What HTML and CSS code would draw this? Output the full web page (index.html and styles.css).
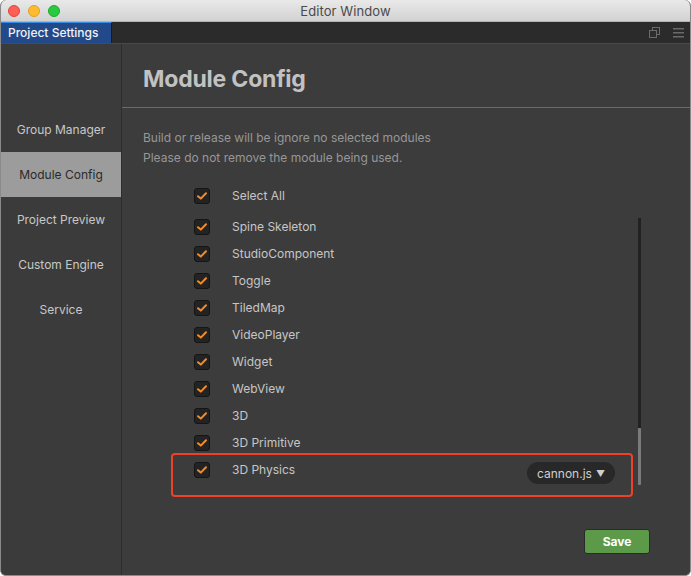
FILE: index.html
```html
<!DOCTYPE html>
<html>
<head>
<meta charset="utf-8">
<link rel="stylesheet" href="styles.css">
</head>
<body>
<div class="window">
  <div class="titlebar">
    <div class="lights">
      <span class="light red"></span>
      <span class="light yellow"></span>
      <span class="light green"></span>
    </div>
    <div class="title">Editor Window</div>
  </div>
  <div class="tabbar">
    <div class="tab">Project Settings</div>
    <div class="tab-tools">
      <svg width="11" height="11" viewBox="0 0 11 11"><rect x="3.5" y="0.5" width="7" height="7" fill="none" stroke="#6a6a6a"/><rect x="0.5" y="3.5" width="7" height="7" fill="#2d2d2d" stroke="#6a6a6a"/></svg>
      <svg width="11" height="10" viewBox="0 0 11 10"><rect x="0" y="0" width="11" height="1.5" fill="#6a6a6a"/><rect x="0" y="4" width="11" height="1.5" fill="#6a6a6a"/><rect x="0" y="8" width="11" height="1.5" fill="#6a6a6a"/></svg>
    </div>
  </div>
  <div class="body">
    <div class="sidebar">
      <div class="nav-item">Group Manager</div>
      <div class="nav-item active">Module Config</div>
      <div class="nav-item">Project Preview</div>
      <div class="nav-item">Custom Engine</div>
      <div class="nav-item">Service</div>
    </div>
    <div class="main">
      <h1 class="heading">Module Config</h1>
      <div class="desc">
        <div>Build or release will be ignore no selected modules</div>
        <div>Please do not remove the module being used.</div>
      </div>
      <div class="select-all row">
        <span class="check"><svg width="10" height="8" viewBox="0 0 10 8"><path d="M1 4.2 L3.8 6.6 L9 1.2" fill="none" stroke="#f28c28" stroke-width="2" stroke-linecap="round" stroke-linejoin="round"/></svg></span>
        <span class="label">Select All</span>
      </div>
      <div class="list-wrap">
        <div class="list">
          <div class="row"><span class="check"><svg width="10" height="8" viewBox="0 0 10 8"><path d="M1 4.2 L3.8 6.6 L9 1.2" fill="none" stroke="#f28c28" stroke-width="2" stroke-linecap="round" stroke-linejoin="round"/></svg></span><span class="label">Spine Skeleton</span></div>
          <div class="row"><span class="check"><svg width="10" height="8" viewBox="0 0 10 8"><path d="M1 4.2 L3.8 6.6 L9 1.2" fill="none" stroke="#f28c28" stroke-width="2" stroke-linecap="round" stroke-linejoin="round"/></svg></span><span class="label">StudioComponent</span></div>
          <div class="row"><span class="check"><svg width="10" height="8" viewBox="0 0 10 8"><path d="M1 4.2 L3.8 6.6 L9 1.2" fill="none" stroke="#f28c28" stroke-width="2" stroke-linecap="round" stroke-linejoin="round"/></svg></span><span class="label">Toggle</span></div>
          <div class="row"><span class="check"><svg width="10" height="8" viewBox="0 0 10 8"><path d="M1 4.2 L3.8 6.6 L9 1.2" fill="none" stroke="#f28c28" stroke-width="2" stroke-linecap="round" stroke-linejoin="round"/></svg></span><span class="label">TiledMap</span></div>
          <div class="row"><span class="check"><svg width="10" height="8" viewBox="0 0 10 8"><path d="M1 4.2 L3.8 6.6 L9 1.2" fill="none" stroke="#f28c28" stroke-width="2" stroke-linecap="round" stroke-linejoin="round"/></svg></span><span class="label">VideoPlayer</span></div>
          <div class="row"><span class="check"><svg width="10" height="8" viewBox="0 0 10 8"><path d="M1 4.2 L3.8 6.6 L9 1.2" fill="none" stroke="#f28c28" stroke-width="2" stroke-linecap="round" stroke-linejoin="round"/></svg></span><span class="label">Widget</span></div>
          <div class="row"><span class="check"><svg width="10" height="8" viewBox="0 0 10 8"><path d="M1 4.2 L3.8 6.6 L9 1.2" fill="none" stroke="#f28c28" stroke-width="2" stroke-linecap="round" stroke-linejoin="round"/></svg></span><span class="label">WebView</span></div>
          <div class="row"><span class="check"><svg width="10" height="8" viewBox="0 0 10 8"><path d="M1 4.2 L3.8 6.6 L9 1.2" fill="none" stroke="#f28c28" stroke-width="2" stroke-linecap="round" stroke-linejoin="round"/></svg></span><span class="label">3D</span></div>
          <div class="row"><span class="check"><svg width="10" height="8" viewBox="0 0 10 8"><path d="M1 4.2 L3.8 6.6 L9 1.2" fill="none" stroke="#f28c28" stroke-width="2" stroke-linecap="round" stroke-linejoin="round"/></svg></span><span class="label">3D Primitive</span></div>
          <div class="row physics"><span class="check"><svg width="10" height="8" viewBox="0 0 10 8"><path d="M1 4.2 L3.8 6.6 L9 1.2" fill="none" stroke="#f28c28" stroke-width="2" stroke-linecap="round" stroke-linejoin="round"/></svg></span><span class="label">3D Physics</span>
            <span class="dropdown">cannon.js <span class="caret">▼</span></span>
          </div>
          <div class="highlight"></div>
        </div>
        <div class="scrollbar"><div class="thumb"></div></div>
      </div>
      <div class="footer">
        <button class="save">Save</button>
      </div>
    </div>
  </div>
</div>
</body>
</html>
```
FILE: styles.css
```css
html, body {
  margin: 0;
  padding: 0;
  background: #ffffff;
}
body {
  width: 691px;
  height: 576px;
  overflow: hidden;
  font-family: Inter, "Noto Sans", "Liberation Sans", sans-serif;
}
.window {
  width: 691px;
  height: 576px;
  box-sizing: border-box;
  border-radius: 6px;
  overflow: hidden;
  display: flex;
  flex-direction: column;
  background: #3c3c3c;
  border: 1px solid #8a8a8a;
  border-top: none;
}
.titlebar {
  height: 22px;
  flex: 0 0 22px;
  background: linear-gradient(#e9e9e9, #d2d2d2);
  border-bottom: 1px solid #b3b3b3;
  box-sizing: border-box;
  display: flex;
  align-items: center;
  justify-content: center;
  position: relative;
}
.lights {
  position: absolute;
  left: 7px;
  top: 5px;
  display: flex;
  gap: 8px;
}
.light {
  width: 12px;
  height: 12px;
  border-radius: 50%;
  box-sizing: border-box;
}
.red { background: #fd5f57; border: 0.5px solid #e0443e; }
.yellow { background: #febb2e; border: 0.5px solid #dea123; }
.green { background: #29c940; border: 0.5px solid #1aab29; }
.title {
  font-size: 13px;
  color: #4a4a4a;
  letter-spacing: 0.1px;
}
.tabbar {
  height: 21px;
  flex: 0 0 21px;
  background: #2b2b2b;
  display: flex;
  justify-content: space-between;
  border-bottom: 1px solid #4a4a4a;
}
.tab {
  width: 111px;
  box-sizing: border-box;
  background: #22498a;
  border-top: 1px solid #3a8de2;
  border-right: 1px solid #1b1b1b;
  color: #f2f2f2;
  font-size: 12px;
  font-weight: 500;
  padding-left: 7px;
  line-height: 19px;
  white-space: nowrap;
}
.tab-tools {
  display: flex;
  align-items: center;
  gap: 13px;
  padding-right: 6px;
}
.body {
  flex: 1;
  display: flex;
  min-height: 0;
}
.sidebar {
  width: 120px;
  flex: 0 0 120px;
  background: #3b3b3b;
  border-right: 1px solid #2e2e2e;
  padding-top: 63px;
}
.nav-item {
  height: 45px;
  display: flex;
  align-items: center;
  justify-content: center;
  font-size: 12px;
  color: #c8c8c8;
}
.nav-item.active {
  background: #9c9c9c;
  color: #2a2a2a;
}
.main {
  flex: 1;
  display: flex;
  flex-direction: column;
  background: #3c3c3c;
}
.heading {
  margin: 0;
  padding: 21px 0 0 21px;
  height: 64px;
  box-sizing: border-box;
  font-size: 23px;
  font-weight: 700;
  color: #c2c2c2;
  border-bottom: 1px solid #6a6a6a;
  letter-spacing: -0.2px;
}
.desc {
  padding: 20px 0 0 21px;
  font-size: 12px;
  line-height: 20px;
  color: #979797;
}
.row {
  height: 27px;
  display: flex;
  align-items: center;
  font-size: 12px;
  color: #c6c6c6;
  position: relative;
}
.select-all {
  margin-top: 14px;
  padding-left: 72px;
}
.select-all .label { margin-left: 22px; }
.check {
  width: 16px;
  height: 16px;
  box-sizing: border-box;
  background: #232323;
  border: 1px solid #151515;
  border-radius: 3px;
  display: flex;
  align-items: center;
  justify-content: center;
}
.label {
  margin-left: 22px;
}
.list-wrap {
  display: flex;
  margin-top: 4px;
}
.list {
  flex: 0 0 514px;
  position: relative;
  padding-left: 72px;
  box-sizing: border-box;
}
.physics {
  height: 42px;
  align-items: flex-start;
  padding-top: 6px;
  box-sizing: border-box;
}
.dropdown {
  margin-left: auto;
  margin-right: 21px;
  margin-top: 0;
  height: 22px;
  width: 88px;
  box-sizing: border-box;
  border-radius: 11px;
  background: #282828;
  color: #cfcfcf;
  font-size: 12px;
  display: flex;
  align-items: center;
  justify-content: center;
  gap: 4px;
}
.caret {
  font-size: 9px;
}
.highlight {
  position: absolute;
  left: 49px;
  right: 3px;
  bottom: 1px;
  height: 44px;
  border: 2px solid #ef4128;
  border-radius: 4px;
  box-sizing: border-box;
  pointer-events: none;
}
.scrollbar {
  width: 3px;
  margin-left: 2px;
  margin-top: 5px;
  height: 267px;
  background: linear-gradient(#222 0, #222 210px, transparent 210px);
  position: relative;
}
.scrollbar .thumb {
  position: absolute;
  left: 0;
  top: 210px;
  width: 3px;
  height: 57px;
  background: #7b7b7b;
  border-radius: 1px;
}
.footer {
  display: flex;
  justify-content: flex-end;
  padding: 31px 40px 0 0;
}
.save {
  width: 66px;
  height: 25px;
  background: #5c9a4a;
  border: 1px solid #2a2a2a;
  border-radius: 3px;
  color: #ffffff;
  font-family: inherit;
  font-weight: 700;
  font-size: 12px;
  padding: 0;
}
```
